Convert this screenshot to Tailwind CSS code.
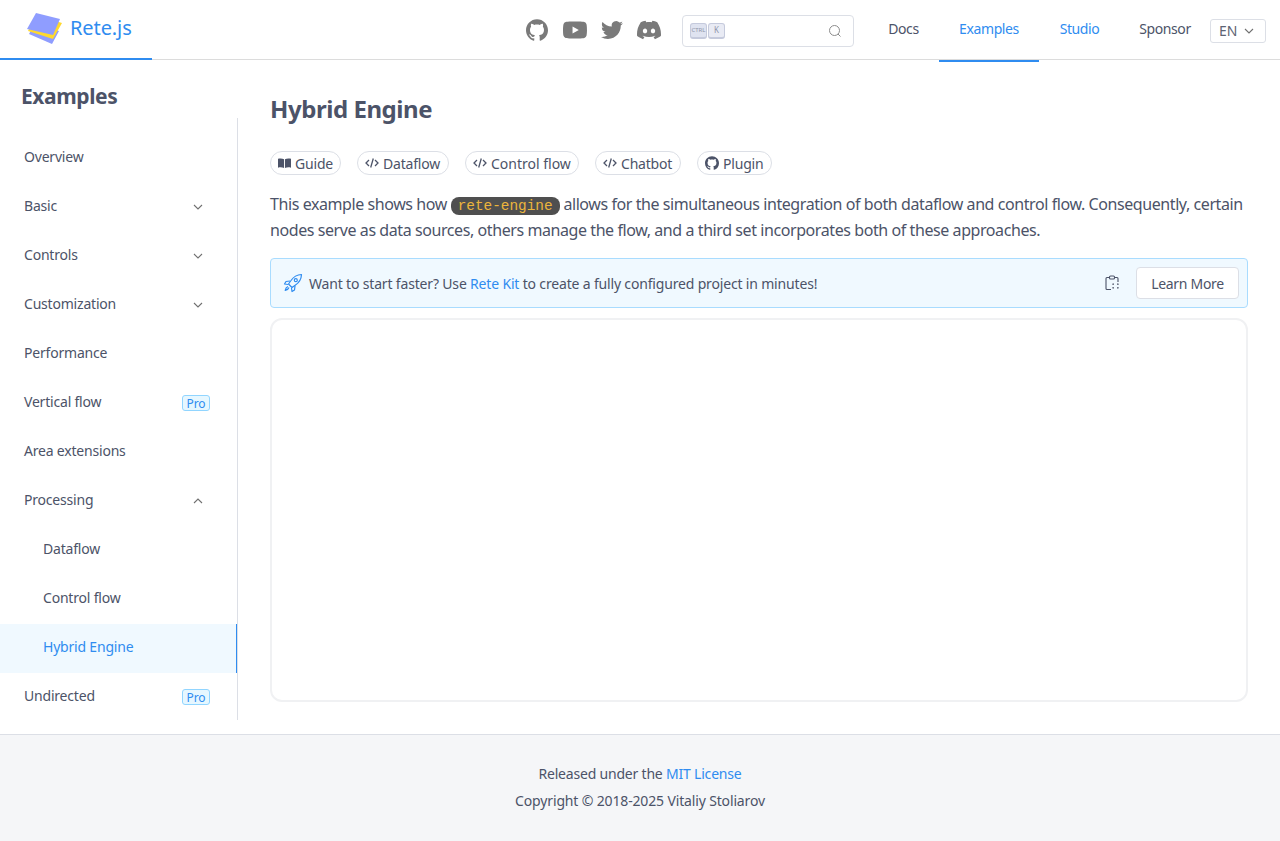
<!DOCTYPE html>
<html lang="en">
<head>
<meta charset="utf-8">
<title>Hybrid Engine</title>
<script src="https://cdn.jsdelivr.net/npm/@tailwindcss/browser@4"></script>
</head>
<body class="m-0 bg-white font-['Noto_Sans',sans-serif] text-[#4c5368]">
<div class="flex flex-col h-[841px] overflow-hidden">
  <header class="h-[60px] shrink-0 border-b border-[#dcdcdc] flex items-start text-[14px] tracking-[-0.4px]">
    <a class="w-[152px] h-[60px] shrink-0 border-b-2 border-[#2f8cf0] flex items-center pl-[26px] gap-[8px] text-[#2f8cf0] text-[20px] tracking-[-0.1px]">
      <svg width="36" height="34" viewBox="26 11 36 34" class="shrink-0">
        <polygon points="29,33 52,43 59,30 35,22" fill="#8f9dff"/>
        <polygon points="28,30 53,38 62,22 36,14" fill="#ffd92e"/>
        <polygon points="36,12 60,18 53,34 27,28" fill="#8f9dff"/>
      </svg>
      <span class="pb-[3px]">Rete.js</span>
    </a>
    <div class="flex-1 flex justify-end items-start">
      <div class="flex items-center h-[60px] gap-[14px] mr-[21px] text-[#7a7a7a]">
        <svg class="mr-px" width="22" height="22" viewBox="0 0 24 24" fill="currentColor"><path d="M12 .297c-6.63 0-12 5.373-12 12 0 5.303 3.438 9.8 8.205 11.385.6.113.82-.258.82-.577 0-.285-.01-1.04-.015-2.04-3.338.724-4.042-1.61-4.042-1.61C4.422 18.07 3.633 17.7 3.633 17.7c-1.087-.744.084-.729.084-.729 1.205.084 1.838 1.236 1.838 1.236 1.07 1.835 2.809 1.305 3.495.998.108-.776.417-1.305.76-1.605-2.665-.3-5.466-1.332-5.466-5.93 0-1.31.465-2.38 1.235-3.22-.135-.303-.54-1.523.105-3.176 0 0 1.005-.322 3.3 1.23.96-.267 1.98-.399 3-.405 1.02.006 2.04.138 3 .405 2.28-1.552 3.285-1.23 3.285-1.23.645 1.653.24 2.873.12 3.176.765.84 1.23 1.91 1.23 3.22 0 4.61-2.805 5.625-5.475 5.92.42.36.81 1.096.81 2.22 0 1.606-.015 2.896-.015 3.286 0 .315.21.69.825.57C20.565 22.092 24 17.592 24 12.297c0-6.627-5.373-12-12-12"/></svg>
        <svg width="24" height="24" viewBox="0 0 24 24" fill="currentColor"><path d="M23.498 6.186a3.016 3.016 0 0 0-2.122-2.136C19.505 3.545 12 3.545 12 3.545s-7.505 0-9.377.505A3.017 3.017 0 0 0 .502 6.186C0 8.07 0 12 0 12s0 3.93.502 5.814a3.016 3.016 0 0 0 2.122 2.136c1.871.505 9.376.505 9.376.505s7.505 0 9.377-.505a3.015 3.015 0 0 0 2.122-2.136C24 15.93 24 12 24 12s0-3.93-.502-5.814zM9.545 15.568V8.432L15.818 12l-6.273 3.568z"/></svg>
        <svg width="22" height="22" viewBox="0 0 24 24" fill="currentColor"><path d="M23.953 4.57a10 10 0 01-2.825.775 4.958 4.958 0 002.163-2.723c-.951.555-2.005.959-3.127 1.184a4.92 4.92 0 00-8.384 4.482C7.69 8.095 4.067 6.13 1.64 3.162a4.822 4.822 0 00-.666 2.475c0 1.71.87 3.213 2.188 4.096a4.904 4.904 0 01-2.228-.616v.06a4.923 4.923 0 003.946 4.827 4.996 4.996 0 01-2.212.085 4.936 4.936 0 004.604 3.417 9.867 9.867 0 01-6.102 2.105c-.39 0-.779-.023-1.17-.067a13.995 13.995 0 007.557 2.209c9.053 0 13.998-7.496 13.998-13.985 0-.21 0-.42-.015-.63A9.935 9.935 0 0024 4.59z"/></svg>
        <svg width="24" height="24" viewBox="0 0 24 24" fill="currentColor"><path d="M20.317 4.3698a19.7913 19.7913 0 00-4.8851-1.5152.0741.0741 0 00-.0785.0371c-.211.3753-.4447.8648-.6083 1.2495-1.8447-.2762-3.68-.2762-5.4868 0-.1636-.3933-.4058-.8742-.6177-1.2495a.077.077 0 00-.0785-.037 19.7363 19.7363 0 00-4.8852 1.515.0699.0699 0 00-.0321.0277C.5334 9.0458-.319 13.5799.0992 18.0578a.0824.0824 0 00.0312.0561c2.0528 1.5076 4.0413 2.4228 5.9929 3.0294a.0777.0777 0 00.0842-.0276c.4616-.6304.8731-1.2952 1.226-1.9942a.076.076 0 00-.0416-.1057c-.6528-.2476-1.2743-.5495-1.8722-.8923a.077.077 0 01-.0076-.1277c.1258-.0943.2517-.1923.3718-.2914a.0743.0743 0 01.0776-.0105c3.9278 1.7933 8.18 1.7933 12.0614 0a.0739.0739 0 01.0785.0095c.1202.099.246.1981.3728.2924a.077.077 0 01-.0066.1276 12.2986 12.2986 0 01-1.873.8914.0766.0766 0 00-.0407.1067c.3604.698.7719 1.3628 1.225 1.9932a.076.076 0 00.0842.0286c1.961-.6067 3.9495-1.5219 6.0023-3.0294a.077.077 0 00.0313-.0552c.5004-5.177-.8382-9.6739-3.5485-13.6604a.061.061 0 00-.0312-.0286zM8.02 15.3312c-1.1825 0-2.1569-1.0857-2.1569-2.419 0-1.3332.9555-2.4189 2.157-2.4189 1.2108 0 2.1757 1.0952 2.1568 2.419 0 1.3332-.9555 2.4189-2.1569 2.4189zm7.9748 0c-1.1825 0-2.1569-1.0857-2.1569-2.419 0-1.3332.9554-2.4189 2.1569-2.4189 1.2108 0 2.1757 1.0952 2.1568 2.419 0 1.3332-.946 2.4189-2.1568 2.4189Z"/></svg>
      </div>
      <div class="mt-[15px] w-[172px] h-[32px] border border-[#dcdfe6] rounded-[4px] flex items-center pl-[7px] pr-[11px] tracking-normal">
        <span class="w-[17px] h-[16px] rounded-[3px] border border-[#c5cadc] border-b-2 bg-[#dfe3f0] text-[6px] leading-[12px] text-center text-[#8f96aa]">CTRL</span>
        <span class="ml-px w-[17px] h-[16px] rounded-[3px] border border-[#c5cadc] border-b-2 bg-[#e9ebf4] text-[8px] leading-[12px] text-center text-[#8f96aa]">K</span>
        <svg class="ml-auto" width="14" height="14" viewBox="0 0 14 14" fill="none" stroke="#8c8c8c" stroke-width="1"><circle cx="6.5" cy="6.5" r="5"/><path d="M10 10l2.5 2.5"/></svg>
      </div>
      <nav class="ml-[14px] flex items-start">
        <a class="h-[60px] w-[71px] pb-[3px] flex justify-center items-center">Docs</a>
        <a class="h-[62px] w-[100px] pb-[3px] flex justify-center items-center text-[#2f8cf0] border-b-2 border-[#2f8cf0]">Examples</a>
        <a class="h-[60px] w-[81px] pb-[3px] flex justify-center items-center text-[#2f8cf0]">Studio</a>
        <a class="h-[60px] w-[90px] pb-[3px] flex justify-center items-center">Sponsor</a>
      </nav>
      <div class="mt-[19px] mr-[14px] w-[56px] h-[24px] pb-[2px] border border-[#dcdfe6] rounded-[3px] flex items-center pl-[8px] gap-[7px] text-[14px] tracking-normal text-[#5d6373]">
        <span>EN</span>
        <svg class="mt-[2px]" width="10" height="10" viewBox="0 0 10 10" fill="none" stroke="#707070" stroke-width="1.1"><path d="M1 3l4 4 4-4"/></svg>
      </div>
    </div>
  </header>

  <div class="flex-1 flex min-h-0">
    <aside class="w-[238px] shrink-0 flex flex-col text-[14px] tracking-[-0.2px]">
      <h2 class="pl-[21px] pt-[22px] h-[58px] text-[21px] leading-[29px] font-bold tracking-[-0.4px]">Examples</h2>
      <div class="h-[602px] border-r border-[#dcdfe6] pt-[16px]">
        <a class="h-[49px] pb-[4px] flex items-center pl-[24px]">Overview</a>
        <a class="h-[49px] pb-[4px] flex items-center pl-[24px] pr-[34px] justify-between">Basic<svg class="mt-[2px]" width="10" height="10" viewBox="0 0 10 10" fill="none" stroke="#707070" stroke-width="1.1"><path d="M1 3l4 4 4-4"/></svg></a>
        <a class="h-[49px] pb-[4px] flex items-center pl-[24px] pr-[34px] justify-between">Controls<svg class="mt-[2px]" width="10" height="10" viewBox="0 0 10 10" fill="none" stroke="#707070" stroke-width="1.1"><path d="M1 3l4 4 4-4"/></svg></a>
        <a class="h-[49px] pb-[4px] flex items-center pl-[24px] pr-[34px] justify-between">Customization<svg class="mt-[2px]" width="10" height="10" viewBox="0 0 10 10" fill="none" stroke="#707070" stroke-width="1.1"><path d="M1 3l4 4 4-4"/></svg></a>
        <a class="h-[49px] pb-[4px] flex items-center pl-[24px]">Performance</a>
        <a class="h-[49px] pb-[4px] flex items-center pl-[24px] pr-[27px] justify-between">Vertical flow<span class="mt-[2px] h-[16px] w-[28px] rounded-[3px] border border-[#91d5ff] bg-[#e6f7ff] text-[#2f8cf0] text-[12px] leading-[15px] tracking-normal text-center">Pro</span></a>
        <a class="h-[49px] pb-[4px] flex items-center pl-[24px]">Area extensions</a>
        <a class="h-[49px] pb-[4px] flex items-center pl-[24px] pr-[34px] justify-between">Processing<svg class="mt-[2px]" width="10" height="10" viewBox="0 0 10 10" fill="none" stroke="#707070" stroke-width="1.1"><path d="M1 7l4-4 4 4"/></svg></a>
        <a class="h-[49px] pb-[4px] flex items-center pl-[43px]">Dataflow</a>
        <a class="h-[49px] pb-[4px] flex items-center pl-[43px]">Control flow</a>
        <a class="h-[49px] pb-[4px] flex items-center pl-[43px] bg-[#f0f9ff] text-[#2f8cf0] border-r border-[#2f8cf0]">Hybrid Engine</a>
        <a class="h-[49px] pb-[4px] flex items-center pl-[24px] pr-[27px] justify-between">Undirected<span class="mt-[2px] h-[16px] w-[28px] rounded-[3px] border border-[#91d5ff] bg-[#e6f7ff] text-[#2f8cf0] text-[12px] leading-[15px] tracking-normal text-center">Pro</span></a>
      </div>
    </aside>

    <main class="flex-1 min-w-0 px-[32px]">
      <h1 class="mt-[32px] text-[24px] leading-[33px] font-bold tracking-[-0.45px]">Hybrid Engine</h1>
      <div class="mt-[26px] flex gap-[16px] text-[14px] tracking-[-0.2px]">
        <a class="w-[71px] h-[24px] px-[7px] rounded-full border border-[#dcdfe6] flex items-center gap-[4px]"><svg width="14" height="14" viewBox="0 0 14 14" fill="currentColor"><path d="M0 2.5c2.5-.8 4.8-.5 6.5.5v9.5c-1.8-.9-4-1.2-6.5-.5zM14 2.5c-2.5-.8-4.8-.5-6.5.5v9.5c1.8-.9 4-1.2 6.5-.5z"/></svg>Guide</a>
        <a class="w-[92px] h-[24px] px-[7px] rounded-full border border-[#dcdfe6] flex items-center gap-[4px]"><svg width="14" height="14" viewBox="0 0 14 14" fill="none" stroke="currentColor" stroke-width="1.3"><path d="M4 4L1 7l3 3M10 4l3 3-3 3M8.3 2.5L5.7 11.5"/></svg>Dataflow</a>
        <a class="w-[114px] h-[24px] px-[7px] rounded-full border border-[#dcdfe6] flex items-center gap-[4px] tracking-normal"><svg width="14" height="14" viewBox="0 0 14 14" fill="none" stroke="currentColor" stroke-width="1.3"><path d="M4 4L1 7l3 3M10 4l3 3-3 3M8.3 2.5L5.7 11.5"/></svg>Control flow</a>
        <a class="w-[86px] h-[24px] px-[7px] rounded-full border border-[#dcdfe6] flex items-center gap-[4px]"><svg width="14" height="14" viewBox="0 0 14 14" fill="none" stroke="currentColor" stroke-width="1.3"><path d="M4 4L1 7l3 3M10 4l3 3-3 3M8.3 2.5L5.7 11.5"/></svg>Chatbot</a>
        <a class="w-[75px] h-[24px] px-[7px] rounded-full border border-[#dcdfe6] flex items-center gap-[4px]"><svg width="14" height="14" viewBox="0 0 24 24" fill="currentColor"><path d="M12 .297c-6.63 0-12 5.373-12 12 0 5.303 3.438 9.8 8.205 11.385.6.113.82-.258.82-.577 0-.285-.01-1.04-.015-2.04-3.338.724-4.042-1.61-4.042-1.61C4.422 18.07 3.633 17.7 3.633 17.7c-1.087-.744.084-.729.084-.729 1.205.084 1.838 1.236 1.838 1.236 1.07 1.835 2.809 1.305 3.495.998.108-.776.417-1.305.76-1.605-2.665-.3-5.466-1.332-5.466-5.93 0-1.31.465-2.38 1.235-3.22-.135-.303-.54-1.523.105-3.176 0 0 1.005-.322 3.3 1.23.96-.267 1.98-.399 3-.405 1.02.006 2.04.138 3 .405 2.28-1.552 3.285-1.23 3.285-1.23.645 1.653.24 2.873.12 3.176.765.84 1.23 1.91 1.23 3.22 0 4.61-2.805 5.625-5.475 5.92.42.36.81 1.096.81 2.22 0 1.606-.015 2.896-.015 3.286 0 .315.21.69.825.57C20.565 22.092 24 17.592 24 12.297c0-6.627-5.373-12-12-12"/></svg>Plugin</a>
      </div>
      <p class="mt-[16px] text-[16px] leading-[26px] tracking-[-0.42px]">This example shows how <code class="font-['Liberation_Mono',monospace] text-[14.4px] leading-none tracking-normal bg-[#4f4f4f] text-[#ecb53c] rounded-[8px] px-[7px] py-[1px]">rete-engine</code> allows for the simultaneous integration of both dataflow and control flow. Consequently, certain nodes serve as data sources, others manage the flow, and a third set incorporates both of these approaches.</p>
      <div class="mt-[15px] h-[50px] rounded-[4px] border border-[#a9dcff] bg-[#f0f9ff] flex items-center pl-[12px] pr-[8px] text-[14px] tracking-[-0.17px]">
        <svg width="20" height="20" viewBox="0 0 20 20" fill="none" stroke="#2f8cf0" stroke-width="1.2" stroke-linejoin="round"><path d="M18.5 1.5c-4.5.2-7.8 2-10.5 6L5.5 11 9 14.5l3.5-2.5c4-2.7 5.8-6 6-10.5z"/><circle cx="12.8" cy="7.2" r="1.5"/><path d="M7 8l-4 .5-1.5 2.5 3.5.5M12 13l-.5 4-2.5 1.5-.5-3.5M5 13.5c-1.5.5-2.5 2-2.8 3.8 1.8-.3 3.3-1.3 3.8-2.8"/></svg>
        <span class="ml-[6px]">Want to start faster? Use <a class="text-[#2f8cf0]">Rete Kit</a> to create a fully configured project in minutes!</span>
        <svg class="ml-auto" width="14" height="16" viewBox="0 0 14 16" fill="none" stroke="#4c5368" stroke-width="1.1"><path d="M4 2.5H2a1 1 0 0 0-1 1v10a1 1 0 0 0 1 1h4M10 2.5h2a1 1 0 0 1 1 1V7"/><rect x="4.5" y="1" width="5" height="3" rx="1"/><path d="M8 10V9h1M12 9h1v1M13 12v1h-1M9 13H8v-1"/></svg>
        <a class="ml-[17px] w-[103px] h-[32px] bg-white rounded-[4px] border border-[#dcdfe6] flex items-center justify-center tracking-[-0.3px]">Learn More</a>
      </div>
      <div class="mt-[10px] h-[384px] rounded-[12px] border-2 border-[#f0f1f3] bg-white"></div>
    </main>
  </div>

  <footer class="h-[107px] shrink-0 border-t border-[#dcdfe6] bg-[#f5f6f8] pt-[25px] text-center text-[14px] leading-[27px] tracking-[-0.15px]">
    <div class="tracking-[-0.2px]">Released under the <a class="text-[#2f8cf0]">MIT License</a></div>
    <div>Copyright © 2018-2025 Vitaliy Stoliarov</div>
  </footer>
</div>
</body>
</html>
